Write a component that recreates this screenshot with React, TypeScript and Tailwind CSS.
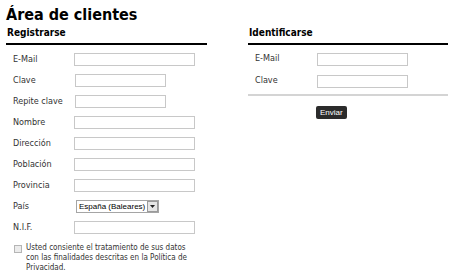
export default function App() {
  const left = [
    { label: "E-Mail", w: "w-[121px]", ml: "ml-0" },
    { label: "Clave", w: "w-[91px]", ml: "ml-px" },
    { label: "Repite clave", w: "w-[91px]", ml: "ml-px" },
    { label: "Nombre", w: "w-[121px]", ml: "ml-0" },
    { label: "Dirección", w: "w-[121px]", ml: "ml-0" },
    { label: "Población", w: "w-[121px]", ml: "ml-0" },
    { label: "Provincia", w: "w-[121px]", ml: "ml-0" },
  ];

  return (
    <div className="h-[271px] w-[450px] overflow-hidden bg-white pl-[6px] font-['DejaVu_Sans_Condensed','DejaVu_Sans',sans-serif] text-[#333]">
      <h1 className="pt-[5px] text-[16px] font-bold leading-[20px] text-black">Área de clientes</h1>

      <div className="flex gap-[41px]">
        {/* registro */}
        <div className="w-[201px]">
          <h2 className="mt-[2px] pl-px text-[10px] font-bold leading-[12px] text-black">Registrarse</h2>
          <div className="mt-[4px] h-[2px] bg-black" />
          <div className="pt-[4px]">
            {left.map((r) => (
              <div key={r.label} className="flex h-[21px] items-center">
                <span className="w-[68px] pl-[7px] text-[9px]">{r.label}</span>
                <span className={`${r.ml} h-[13px] ${r.w} border border-[#c8c8c8] bg-white`} />
              </div>
            ))}
            <div className="flex h-[21px] items-center">
              <span className="w-[68px] pl-[7px] text-[9px]">País</span>
              <span className="ml-[2px] flex h-[13px] w-[83px] items-center justify-between whitespace-nowrap border border-[#a5a5a5] bg-white pl-[2px] font-['Liberation_Sans',sans-serif] text-[8px] text-black">
                España (Baleares)
                <span className="flex h-[11px] w-[11px] items-center justify-center border border-[#9a9a9a] bg-[#e6e6e6]">
                  <svg width="5" height="3" viewBox="0 0 5 3"><path d="M0 0h5L2.5 3z" fill="#222" /></svg>
                </span>
              </span>
            </div>
            <div className="flex h-[21px] items-center">
              <span className="w-[68px] pl-[7px] text-[9px]">N.I.F.</span>
              <span className="h-[13px] w-[121px] border border-[#c8c8c8] bg-white" />
            </div>
          </div>
          <div className="mt-[5px] flex gap-[4px] pl-[8px]">
            <span className="mt-[2px] h-[8px] w-[8px] shrink-0 border border-[#b5b5b5] bg-[#ececec]" />
            <p className="w-[168px] text-[8px] leading-[10px]">
              Usted consiente el tratamiento de sus datos con las finalidades descritas en la Política de Privacidad.
            </p>
          </div>
        </div>

        {/* login */}
        <div className="w-[200px]">
          <h2 className="mt-[2px] pl-px text-[10px] font-bold leading-[12px] text-black">Identificarse</h2>
          <div className="mt-[4px] h-[2px] bg-black" />
          <div className="pt-[3px]">
            {["E-Mail", "Clave"].map((l) => (
              <div key={l} className="flex h-[22px] items-center">
                <span className="w-[69px] pl-[7px] text-[9px]">{l}</span>
                <span className="h-[13px] w-[91px] border border-[#c8c8c8] bg-white" />
              </div>
            ))}
          </div>
          <div className="mt-[2px] h-[2px] bg-[#d4d4d4]" />
          <div className="mt-[2px] pl-[68px]">
            <button className="h-[13px] rounded-[2px] bg-[#2b2b2b] px-[4px] font-['Liberation_Sans',sans-serif] text-[8px] leading-[13px] text-white">
              Enviar
            </button>
          </div>
        </div>
      </div>
    </div>
  );
}
